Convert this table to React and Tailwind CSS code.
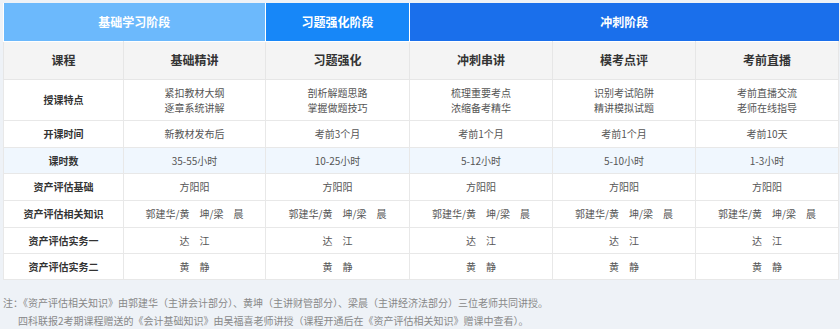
import React from "react";

const courses = ["基础精讲", "习题强化", "冲刺串讲", "模考点评", "考前直播"];

const rows = [
  {
    label: "授课特点",
    h: "h-[41px]",
    cells: [
      ["紧扣教材大纲", "逐章系统讲解"],
      ["剖析解题思路", "掌握做题技巧"],
      ["梳理重要考点", "浓缩备考精华"],
      ["识别考试陷阱", "精讲模拟试题"],
      ["考前直播交流", "老师在线指导"],
    ],
  },
  { label: "开课时间", h: "h-[27px]", cells: ["新教材发布后", "考前3个月", "考前1个月", "考前1个月", "考前10天"] },
  { label: "课时数", h: "h-[26px]", hl: true, cells: ["35-55小时", "10-25小时", "5-12小时", "5-10小时", "1-3小时"] },
  { label: "资产评估基础", h: "h-[27px]", cells: Array(5).fill("方阳阳") },
  { label: "资产评估相关知识", h: "h-[27px]", cells: Array(5).fill("郭建华/黄\u3000坤/梁\u3000晨") },
  { label: "资产评估实务一", h: "h-[26px]", cells: Array(5).fill("达\u3000江") },
  { label: "资产评估实务二", h: "h-[26px]", cells: Array(5).fill("黄\u3000静") },
];

const App = () => {
  return (
    <div
      className="w-[840px] h-[329px] bg-[#eef2f7] pt-[3px] pl-[3px] overflow-hidden"
      style={{ fontFamily: '"Noto Sans CJK SC", "Liberation Sans", sans-serif' }}
    >
      <table className="table-fixed border-collapse w-[835px] bg-white text-center">
        <colgroup>
          <col className="w-[120px]" />
          <col className="w-[142px]" />
          <col className="w-[144px]" />
          <col className="w-[143px]" />
          <col className="w-[143px]" />
          <col className="w-[143px]" />
        </colgroup>
        <thead>
          <tr className="h-[38px] text-white text-[12px] font-bold">
            <th colSpan={2} className="bg-[#6cb9fc] border-r border-white">基础学习阶段</th>
            <th className="bg-[#1787f8] border-r border-white">习题强化阶段</th>
            <th colSpan={3} className="bg-[#1a6feb]">冲刺阶段</th>
          </tr>
          <tr className="h-[38px] bg-[#f4f4f4] text-[#333] text-[12px] font-bold">
            <th className="border border-[#e6e6e6] border-t-white">课程</th>
            {courses.map((c) => (
              <th key={c} className="border border-[#e6e6e6] border-t-white">{c}</th>
            ))}
          </tr>
        </thead>
        <tbody className="text-[10px] text-[#555]">
          {rows.map((r) => (
            <tr key={r.label} className={`${r.h} ${r.hl ? "bg-[#f0f7fe]" : "bg-white"}`}>
              <td className="border border-[#e8e8e8] font-bold text-[#333]">{r.label}</td>
              {r.cells.map((c, i) => (
                <td key={i} className="border border-[#e8e8e8] leading-[15px] whitespace-pre">
                  {Array.isArray(c) ? (
                    <>
                      <div>{c[0]}</div>
                      <div>{c[1]}</div>
                    </>
                  ) : (
                    c
                  )}
                </td>
              ))}
            </tr>
          ))}
        </tbody>
      </table>
      <div className="mt-[14px] text-[10px] leading-[18px] text-[#888]">
        <p>注：《资产评估相关知识》由郭建华（主讲会计部分）、黄坤（主讲财管部分）、梁晨（主讲经济法部分）三位老师共同讲授。</p>
        <p className="pl-[15px]">四科联报2考期课程赠送的《会计基础知识》由吴福喜老师讲授（课程开通后在《资产评估相关知识》赠课中查看）。</p>
      </div>
    </div>
  );
};

export default App;
